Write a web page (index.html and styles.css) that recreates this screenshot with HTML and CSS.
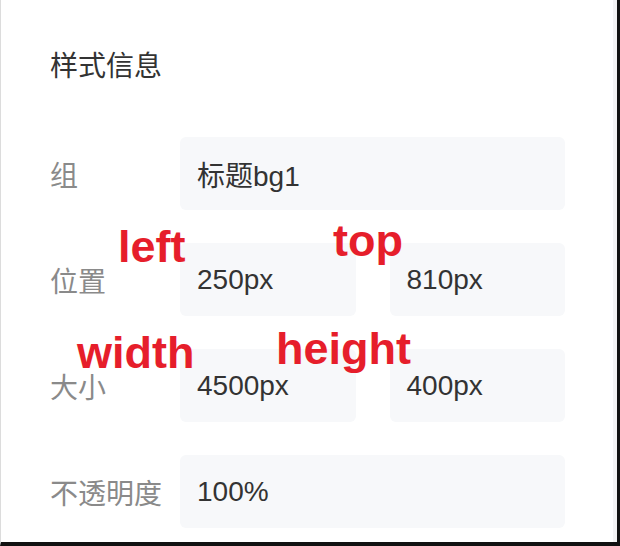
FILE: index.html
```html
<!DOCTYPE html>
<html lang="zh-CN">
<head>
    <meta charset="UTF-8">
    <meta name="viewport" content="width=device-width, initial-scale=1.0">
    <title>样式信息</title>
    <link rel="stylesheet" href="styles.css">
</head>
<body>
    <div class="frame">
        <div class="panel">
            <div class="panel-title">样式信息</div>

            <div class="form-row">
                <div class="form-label">组</div>
                <div class="form-fields">
                    <div class="field">标题bg1</div>
                </div>
            </div>

            <div class="form-row">
                <div class="form-label">位置</div>
                <div class="form-fields">
                    <div class="field">250px</div>
                    <div class="field">810px</div>
                </div>
            </div>

            <div class="form-row">
                <div class="form-label">大小</div>
                <div class="form-fields">
                    <div class="field">4500px</div>
                    <div class="field">400px</div>
                </div>
            </div>

            <div class="form-row">
                <div class="form-label">不透明度</div>
                <div class="form-fields">
                    <div class="field">100%</div>
                </div>
            </div>

            <!-- red notes drawn over the screenshot -->
            <span class="note note-left">left</span>
            <span class="note note-top">top</span>
            <span class="note note-width">width</span>
            <span class="note note-height">height</span>
        </div>
    </div>
</body>
</html>
```

FILE: styles.css
```css
body {
    margin: 0;
    padding: 0;
    background: #fff;
    font-family: "Liberation Sans", "Noto Sans CJK SC", sans-serif;
}
.frame {
    width: 620px;
    height: 546px;
    box-sizing: border-box;
    border-left: 1px solid #dcdcdc;
    border-right: 3px solid #111;
    border-bottom: 4px solid #111;
    overflow: hidden;
}
.panel {
    position: relative;
    height: 100%;
    box-sizing: border-box;
    padding: 47px 0 0 49px;
    border-right: 4px solid #f3f3f4;
}
.panel-title {
    font-size: 28px;
    line-height: 40px;
    color: #333;
    margin-bottom: 50px;
}
.form-row {
    display: flex;
    align-items: center;
    height: 73px;
    margin-bottom: 33px;
}
.form-label {
    width: 130px;
    font-size: 28px;
    color: #8a8a8a;
}
.form-fields {
    display: flex;
    gap: 34px;
    width: 385px;
    height: 100%;
}
.field {
    flex: 1;
    display: flex;
    align-items: center;
    padding-left: 17px;
    background: #f7f8fa;
    border-radius: 6px;
    font-size: 28px;
    color: #333;
}
.note {
    position: absolute;
    font-size: 45px;
    line-height: 32px;
    font-weight: bold;
    color: #e61e2b;
}
.note-left { left: 117px; top: 231px; }
.note-top { left: 332px; top: 225px; }
.note-width { left: 76px; top: 337px; }
.note-height { left: 275px; top: 333px; }
```
